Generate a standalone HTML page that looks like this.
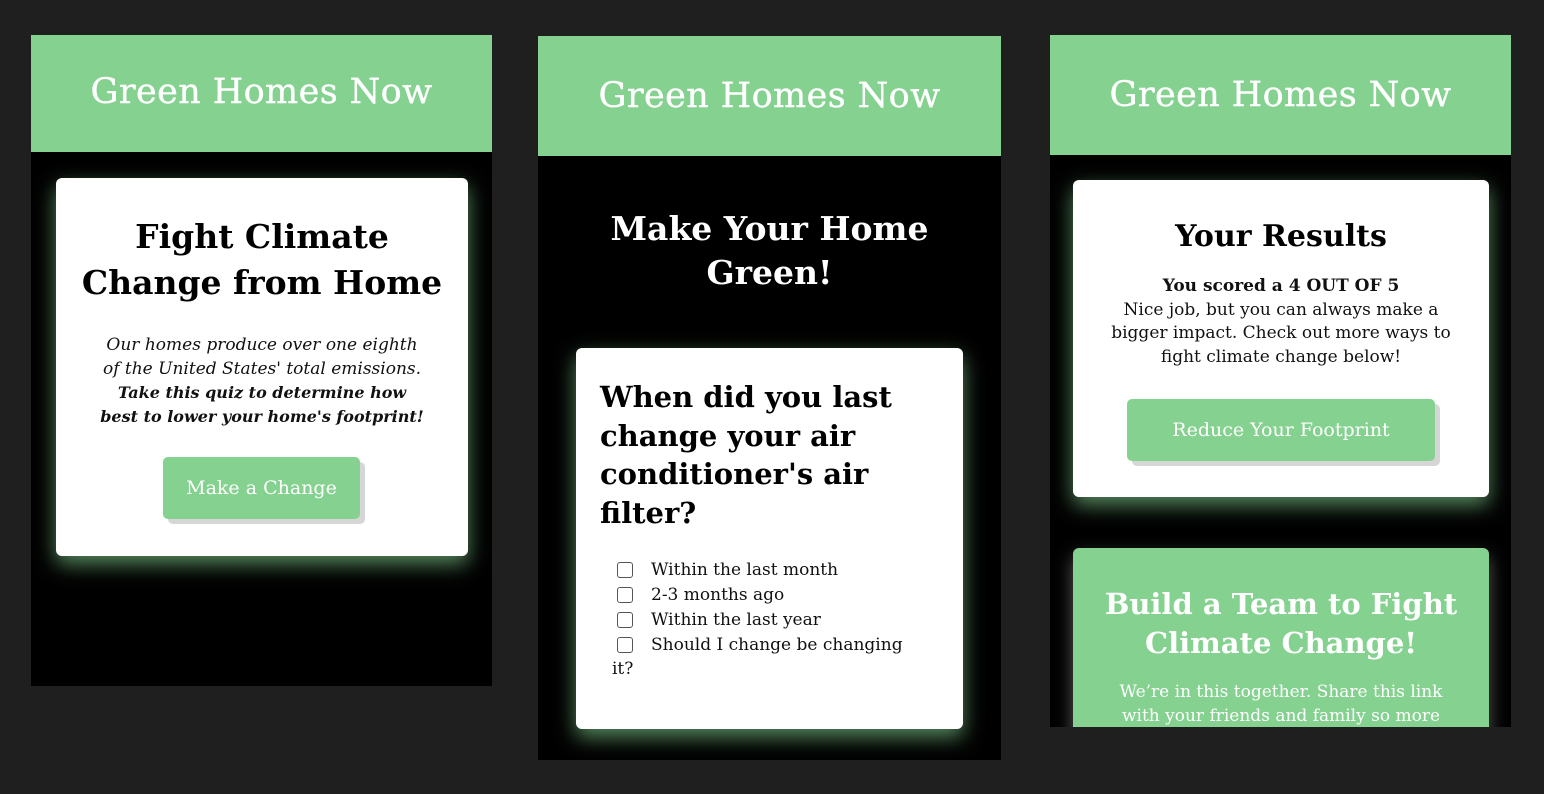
<!DOCTYPE html>
<html><head><meta charset="utf-8"><style>
*{margin:0;padding:0;box-sizing:border-box}
body{width:1544px;height:794px;background:#1f1f1f;position:relative;overflow:hidden;font-family:"DejaVu Serif","Liberation Serif",serif}
.p{position:absolute;background:#000;overflow:hidden}
.h{position:absolute;left:0;right:0;top:0;background:#84d190;color:#fff;font-size:35px;text-align:center;font-weight:normal;letter-spacing:0.4px;-webkit-text-stroke:0.4px #fff}
.c{position:absolute;background:#fff;border-radius:6px;box-shadow:0 8px 20px rgba(132,209,144,.65)}
.t{position:absolute;white-space:nowrap;text-align:center}
.btn{position:absolute;background:#84d190;color:#fff;border-radius:5px;box-shadow:5px 5px 0 #d6d6d6;text-align:center;font-size:19px}
.cb{position:absolute;width:16px;height:16px;border:1.5px solid #555;border-radius:3px;background:#fff}
</style></head><body>

<div class="p" style="left:31px;top:35px;width:461px;height:651px">
  <div class="h" style="height:117px;line-height:114px">Green Homes Now</div>
</div>
<div class="c" style="left:56px;top:178px;width:412px;height:378px"></div>
<div class="t" style="left:56px;width:412px;top:214px;font-size:33px;font-weight:bold;line-height:46px;color:#000">Fight Climate<br>Change from Home</div>
<div class="t" style="left:56px;width:412px;top:333px;font-size:17px;font-style:italic;line-height:24px;color:#111">Our homes produce over one eighth<br>of the United States' total emissions.<br><b style="font-size:16px">Take this quiz to determine how<br>best to lower your home's footprint!</b></div>
<div class="btn" style="left:163px;top:457px;width:197px;height:62px;line-height:62px">Make a Change</div>

<div class="p" style="left:538px;top:36px;width:463px;height:724px">
  <div class="h" style="height:120px;line-height:120px">Green Homes Now</div>
</div>
<div class="t" style="left:538px;width:463px;top:207px;font-size:33px;font-weight:bold;line-height:44px;color:#fff">Make Your Home<br>Green!</div>
<div class="c" style="left:576px;top:348px;width:387px;height:381px"></div>
<div class="t" style="left:600px;top:378px;text-align:left;font-size:29px;font-weight:bold;line-height:38.5px;color:#000">When did you last<br>change your air<br>conditioner's air<br>filter?</div>
<div class="cb" style="left:617px;top:562px"></div>
<div class="cb" style="left:617px;top:587px"></div>
<div class="cb" style="left:617px;top:612px"></div>
<div class="cb" style="left:617px;top:637px"></div>
<div class="t" style="left:651px;top:558px;text-align:left;font-size:17px;line-height:25px;color:#111">Within the last month<br>2-3 months ago<br>Within the last year<br>Should I change be changing</div>
<div class="t" style="left:612px;top:657px;text-align:left;font-size:17px;line-height:24px;color:#111">it?</div>

<div class="p" style="left:1050px;top:35px;width:461px;height:692px">
  <div class="h" style="height:120px;line-height:120px">Green Homes Now</div>
  <div style="position:absolute;left:23px;top:513px;width:416px;height:240px;background:#84d190;border-radius:6px;box-shadow:0 8px 18px rgba(255,255,255,.35)"></div>
  <div class="t" style="left:23px;width:416px;top:550px;font-size:29px;font-weight:bold;line-height:39px;color:#fff">Build a Team to Fight<br>Climate Change!</div>
  <div class="t" style="left:23px;width:416px;top:645px;font-size:17px;line-height:24px;color:#fff">We’re in this together. Share this link<br>with your friends and family so more</div>
</div>
<div class="c" style="left:1073px;top:180px;width:416px;height:317px"></div>
<div class="t" style="left:1073px;width:416px;top:216px;font-size:30px;font-weight:bold;line-height:42px;color:#000">Your Results</div>
<div class="t" style="left:1073px;width:416px;top:275px;font-size:17px;line-height:23.7px;color:#111"><b>You scored a 4 OUT OF 5</b><br>Nice job, but you can always make a<br>bigger impact. Check out more ways to<br>fight climate change below!</div>
<div class="btn" style="left:1127px;top:399px;width:308px;height:62px;line-height:62px">Reduce Your Footprint</div>

</body></html>
